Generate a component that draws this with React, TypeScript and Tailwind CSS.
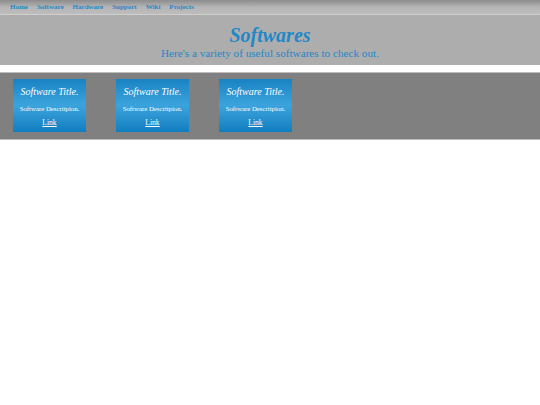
import React from 'react';

const links = ['Home', 'Software', 'Hardware', 'Support', 'Wiki', 'Projects'];
const cards = [1, 2, 3];

const App: React.FC = () => {
  return (
    <div className="min-h-[405px] w-full bg-white font-['Liberation_Serif',serif]">
      {/* nav */}
      <nav className="flex h-[15px] items-center gap-[9px] border-b border-[#cfcfcf] bg-gradient-to-b from-[#8c8c8c] via-[#b4b4b4] to-[#bdbdbd] pl-[10px]">
        {links.map(l => (
          <a key={l} href="#" className="text-[7px] font-bold leading-none text-[#1e88c8]">
            {l}
          </a>
        ))}
      </nav>

      {/* header */}
      <header className="flex h-[50px] flex-col items-center justify-center bg-[#adadad] pt-[4px] text-[#1e88c8]">
        <h1 className="text-[20px] font-bold italic leading-[22px]">Softwares</h1>
        <p className="text-[11.2px] leading-[14px]">Here's a variety of useful softwares to check out.</p>
      </header>

      <div className="h-[7px]" />

      {/* cards */}
      <section className="flex h-[68px] items-start gap-[30px] border-y border-[#bdbdbd] bg-[#808080] pl-[13px] pt-[6px]">
        {cards.map(c => (
          <div
            key={c}
            className="flex h-[53px] w-[73px] flex-col items-center bg-gradient-to-b from-[#1883c3] via-[#3ba3dc] to-[#0f7ec0] pt-[7px] text-white"
          >
            <div className="text-[10px] italic leading-[12px]">Software Title.</div>
            <div className="mt-[7px] text-[6.8px] leading-[8px]">Software Descritpion.</div>
            <a href="#" className="mt-[6px] text-[7.6px] leading-[8px] underline">Link</a>
          </div>
        ))}
      </section>
    </div>
  );
};

export default App;
